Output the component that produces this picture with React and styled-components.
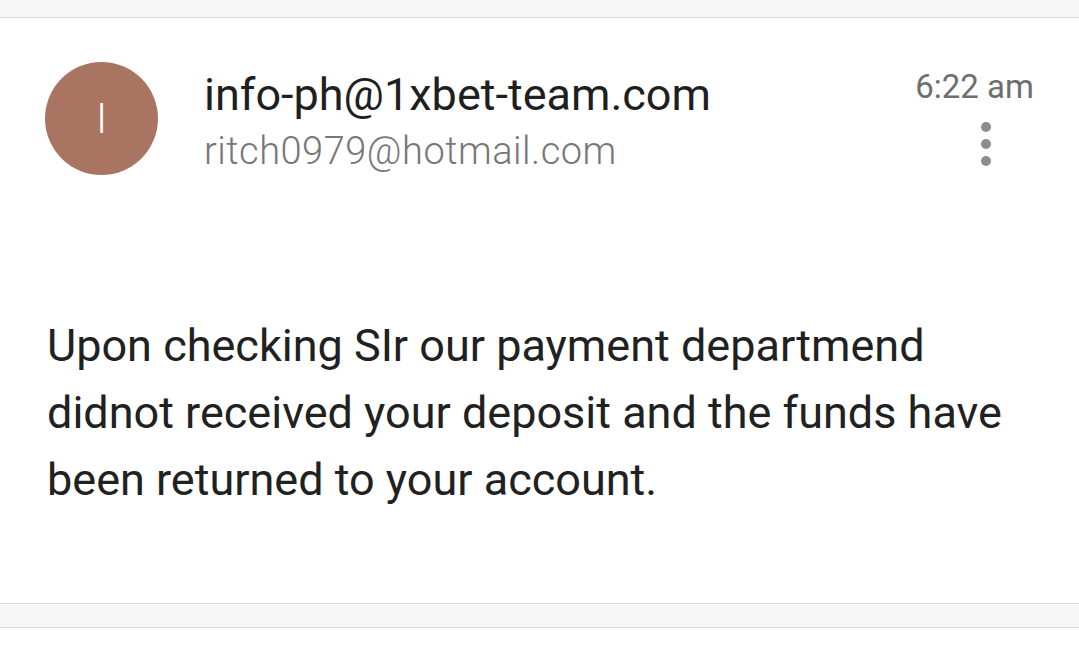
import React from 'react';
import styled, { createGlobalStyle } from 'styled-components';

const GlobalStyle = createGlobalStyle`
  html, body {
    margin: 0;
    padding: 0;
    background: #ffffff;
  }

  body {
    font-family: Roboto, "Noto Sans", Arial, sans-serif;
    -webkit-font-smoothing: antialiased;
  }
`;

const Screen = styled.div`
  width: 1079px;
  height: 645px;
  display: flex;
  flex-direction: column;
  background: #ffffff;
  overflow: hidden;
`;

const Band = styled.div`
  flex: none;
  height: ${({ $height }) => $height}px;
  background: #f6f6f6;
  border-top: ${({ $top }) => ($top ? '1px solid #dcdcdc' : 'none')};
  border-bottom: 1px solid #dedede;
`;

const Message = styled.section`
  flex: none;
  height: 585px;
  display: flex;
  flex-direction: column;
  padding: 44px 45px 0 45px;
  box-sizing: border-box;
`;

const Header = styled.header`
  display: flex;
  align-items: flex-start;
`;

const Avatar = styled.div`
  flex: none;
  width: 113px;
  height: 113px;
  border-radius: 50%;
  background: #a97461;
  color: #ffffff;
  display: flex;
  align-items: center;
  justify-content: center;
  font-size: 42px;
  font-weight: 300;
`;

const Addresses = styled.div`
  flex: 1;
  display: flex;
  flex-direction: column;
  padding-left: 46px;
  padding-top: 6px;
`;

const Sender = styled.div`
  font-size: 45px;
  line-height: 54px;
  color: #1f1f1f;
`;

const Recipient = styled.div`
  margin-top: 4px;
  font-size: 38px;
  line-height: 50px;
  color: #777777;
  font-weight: 300;
  letter-spacing: 0.5px;
`;

const Meta = styled.div`
  flex: none;
  display: flex;
  flex-direction: column;
  align-items: flex-end;
  padding-top: 4px;
`;

const Time = styled.div`
  font-size: 33px;
  line-height: 42px;
  color: #6e6e6e;
`;

const MoreButton = styled.div`
  display: flex;
  flex-direction: column;
  align-items: center;
  gap: 7px;
  width: 40px;
  margin-top: 14px;
  margin-right: 28px;
`;

const Dot = styled.span`
  flex: none;
  width: 10px;
  height: 10px;
  border-radius: 50%;
  background: #8c8c8c;
`;

const Body = styled.p`
  margin: 136px 0 0 2px;
  font-size: 45px;
  line-height: 67px;
  color: #212121;
  max-width: 975px;
`;

export default function App() {
  return (
    <Screen>
      <GlobalStyle />
      <Band $height={17} />
      <Message>
        <Header>
          <Avatar>I</Avatar>
          <Addresses>
            <Sender>info-ph@1xbet-team.com</Sender>
            <Recipient>ritch0979@hotmail.com</Recipient>
          </Addresses>
          <Meta>
            <Time>6:22 am</Time>
            <MoreButton>
              <Dot />
              <Dot />
              <Dot />
            </MoreButton>
          </Meta>
        </Header>
        <Body>
          Upon checking SIr our payment departmend didnot received your deposit
          and the funds have been returned to your account.
        </Body>
      </Message>
      <Band $height={23} $top />
    </Screen>
  );
}
